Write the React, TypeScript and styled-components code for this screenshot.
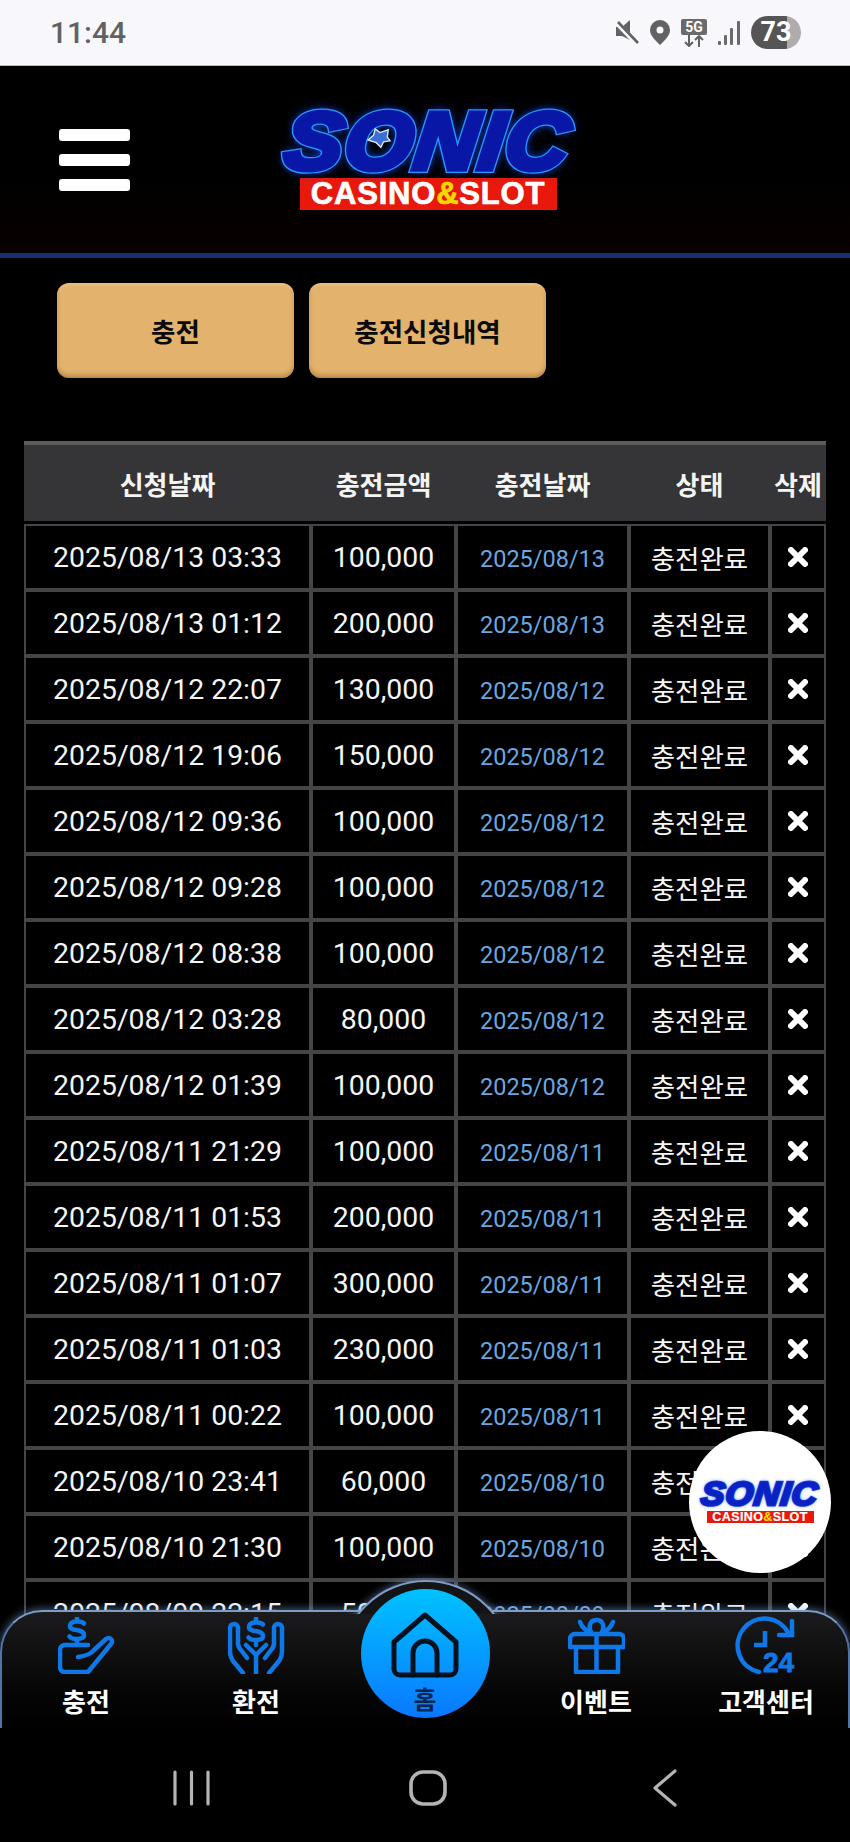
import React from 'react';
import styled, { createGlobalStyle } from 'styled-components';

const GlobalStyle = createGlobalStyle`
  html, body {
    margin: 0;
    padding: 0;
    background: #000;
  }
  * {
    box-sizing: border-box;
  }
`;

const fontStack = `Roboto, "Noto Sans CJK KR", sans-serif`;
const krStack = `"Noto Sans CJK KR", Roboto, sans-serif`;
const navBlue = '#0f78e8';

const Page = styled.div`
  position: relative;
  width: 850px;
  height: 1842px;
  overflow: hidden;
  background: #000;
  font-family: ${fontStack};
  color: #fff;
`;

const StatusBar = styled.div`
  display: flex;
  align-items: center;
  justify-content: space-between;
  height: 66px;
  padding: 0 49px 0 50px;
  background: #f8f7fb;
  border-bottom: 1px solid #bbb;
`;
const Clock = styled.span`
  font-size: 30px;
  font-weight: 500;
  color: #626262;
`;
const StatusIcons = styled.div`
  display: flex;
  align-items: center;
  gap: 11px;
`;
const FiveG = styled.div`
  display: flex;
  flex-direction: column;
  align-items: center;
  width: 26px;
`;
const FiveGTag = styled.span`
  width: 26px;
  height: 16px;
  border-radius: 2px;
  background: #6a6a6a;
  color: #fff;
  font-size: 14px;
  font-weight: 700;
  line-height: 16px;
  text-align: center;
`;
const Battery = styled.div`
  width: 50px;
  height: 33px;
  border-radius: 17px;
  background: linear-gradient(90deg, #555 0 72%, #adadad 72% 100%);
  color: #fff;
  font-size: 27px;
  font-weight: 700;
  line-height: 33px;
  text-align: center;
`;

const Header = styled.header`
  display: flex;
  align-items: center;
  height: 192px;
  padding: 0 0 0 59px;
  background: linear-gradient(#000 55%, #090000);
  border-bottom: 5px solid #14306e;
`;
const Burger = styled.div`
  display: flex;
  flex-direction: column;
  gap: 13px;
  width: 71px;
  margin-right: 149px;
`;
const BurgerBar = styled.span`
  display: block;
  height: 12px;
  border-radius: 3px;
  background: #fff;
`;

const LogoBox = styled.div<{ $small?: boolean }>`
  position: relative;
  display: flex;
  flex-direction: column;
  align-items: center;
  width: ${({ $small }) => ($small ? '120px' : '298px')};
  gap: ${({ $small }) => ($small ? '4px' : '5px')};
`;
/* word is painted twice: wide bright stroke below, narrower dark stroke on top, so the letters get fat with a neon rim */
const LogoWord = styled.span<{ $small?: boolean }>`
  position: relative;
  display: block;
  height: ${({ $small }) => ($small ? '26px' : '64px')};
  font-family: "Liberation Sans", sans-serif;
  font-size: ${({ $small }) => ($small ? '33px' : '81px')};
  font-weight: 700;
  font-style: italic;
  letter-spacing: ${({ $small }) => ($small ? '1px' : '2px')};
  line-height: ${({ $small }) => ($small ? '26px' : '64px')};
  white-space: nowrap;
  color: ${({ $small }) => ($small ? '#1a3fe0' : '#2a97ff')};
  -webkit-text-stroke: ${({ $small }) => ($small ? '3px #1a3fe0' : '8px #2a97ff')};
  text-shadow: ${({ $small }) => ($small ? '0 0 4px #0b4dff' : '0 0 8px #0b4dff, 0 0 12px #0b4dff')};
  transform: scaleX(1.07) skewX(-6deg);
  &::after {
    content: attr(data-text);
    position: absolute;
    left: 0;
    top: 0;
    color: ${({ $small }) => ($small ? '#0a22c4' : '#0917a6')};
    -webkit-text-stroke: ${({ $small }) => ($small ? '1.5px #0a22c4' : '5.500px #0917a6')};
    text-shadow: none;
  }
`;
const LogoMark = styled.svg`
  position: absolute;
  left: 87px;
  top: 18px;
`;
const LogoTag = styled.span<{ $small?: boolean }>`
  display: block;
  width: ${({ $small }) => ($small ? '107px' : '257px')};
  height: ${({ $small }) => ($small ? '12px' : '32px')};
  background: #e8190c;
  font-family: "Liberation Sans", sans-serif;
  font-size: ${({ $small }) => ($small ? '12.5px' : '31px')};
  font-weight: 700;
  letter-spacing: ${({ $small }) => ($small ? '0.4px' : '0.8px')};
  line-height: ${({ $small }) => ($small ? '12px' : '32px')};
  text-align: center;
  color: #fff;
  -webkit-text-stroke: ${({ $small }) => ($small ? '0.2px' : '0.7px')};
  white-space: nowrap;
`;
const Amp = styled.span`
  color: #f8d800;
`;

const Tabs = styled.div`
  display: flex;
  gap: 15px;
  padding: 25px 0 0 57px;
`;
const Tab = styled.div`
  display: flex;
  align-items: center;
  justify-content: center;
  width: 237px;
  height: 95px;
  border-radius: 12px;
  background: #e3b36d;
  box-shadow: inset 0 -3px 4px rgba(130, 85, 30, 0.45), inset 0 2px 3px rgba(255, 235, 190, 0.3);
  color: #0a0a0a;
  font-family: ${krStack};
  font-size: 26.500px;
  font-weight: 700;
`;

const Table = styled.table`
  width: 802px;
  margin: 63px 0 0 24px;
  border-collapse: separate;
  border-spacing: 0;
  table-layout: fixed;
`;
const HeadCell = styled.th`
  height: 83px;
  padding: 0;
  background: #353436;
  background-clip: padding-box;
  border-top: 4px solid #5c5c5c;
  border-bottom: 3px solid #000;
  color: #f4f4f4;
  font-family: ${krStack};
  font-size: 26px;
  font-weight: 700;
  text-align: center;
`;
const Cell = styled.td`
  height: 66px;
  padding: 0;
  border: 2px solid #454547;
  background: #000;
  text-align: center;
  white-space: nowrap;
  font-size: 28.400px;
  color: #f6f6f6;
`;
const AppliedDate = styled.span`
  font-size: 23.500px;
  color: #6aa7e0;
`;
const StateLabel = styled.span`
  font-family: ${krStack};
  font-size: 26.500px;
`;
const DeleteIcon = styled.svg`
  display: block;
  margin: 0 auto;
`;

const FloatingLogo = styled.div`
  position: absolute;
  top: 1431px;
  left: 689px;
  display: flex;
  align-items: center;
  justify-content: center;
  width: 142px;
  height: 142px;
  border-radius: 50%;
  background: #fff;
`;

const Dock = styled.div`
  position: absolute;
  left: 0;
  right: 0;
  bottom: 0;
`;
const BumpClip = styled.div`
  position: absolute;
  top: -42px;
  left: 316px;
  width: 215px;
  height: 44px;
  overflow: hidden;
  z-index: 2;
`;
const Bump = styled.div`
  width: 174px;
  height: 174px;
  margin: 10px auto 0;
  border: 2px solid #7f9cc6;
  border-radius: 50%;
  background: #141416;
  box-shadow: 0 0 8px rgba(125, 170, 230, 0.6);
`;
const NavBar = styled.nav`
  position: relative;
  display: grid;
  grid-template-columns: repeat(5, 170px);
  height: 118px;
  border: 2px solid #4f74a6;
  border-top-color: #7f9cc6;
  border-bottom: none;
  border-radius: 42px 42px 0 0;
  background: linear-gradient(#1b1b1d, #050505 70%, #000);
  box-shadow: 0 -1px 8px rgba(125, 170, 230, 0.55);
  clip-path: inset(-60px -12px 0 -12px);
`;
const NavItem = styled.div`
  display: flex;
  flex-direction: column;
  align-items: center;
  padding-top: 5px;
  margin-left: -2px;
`;
const NavLabel = styled.span`
  margin-top: 8px;
  font-family: ${krStack};
  font-size: 26px;
  font-weight: 700;
  line-height: 38px;
  white-space: nowrap;
  color: #fff;
`;
const HomeButton = styled.div`
  position: relative;
  z-index: 3;
  display: flex;
  flex-direction: column;
  align-items: center;
  width: 129px;
  height: 129px;
  margin: -23px auto 0;
  padding-top: 23px;
  border-radius: 50%;
  background: linear-gradient(#00c2ff, #0a78ff);
  transform: translateX(-2px);
`;
const HomeLabel = styled.span`
  margin-top: 5px;
  font-family: ${krStack};
  font-size: 25px;
  font-weight: 700;
  line-height: 30px;
  color: #06274f;
`;

const SystemNav = styled.div`
  display: grid;
  grid-template-columns: repeat(3, 237px);
  justify-content: center;
  align-items: center;
  height: 114px;
  padding: 6px 0 0 6px;
  background: #000;
`;
const SystemSlot = styled.div`
  display: flex;
  justify-content: center;
`;

type Row = { applied: string; amount: string; date: string };

const rows: Row[] = [
  { applied: '2025/08/13 03:33', amount: '100,000', date: '2025/08/13' },
  { applied: '2025/08/13 01:12', amount: '200,000', date: '2025/08/13' },
  { applied: '2025/08/12 22:07', amount: '130,000', date: '2025/08/12' },
  { applied: '2025/08/12 19:06', amount: '150,000', date: '2025/08/12' },
  { applied: '2025/08/12 09:36', amount: '100,000', date: '2025/08/12' },
  { applied: '2025/08/12 09:28', amount: '100,000', date: '2025/08/12' },
  { applied: '2025/08/12 08:38', amount: '100,000', date: '2025/08/12' },
  { applied: '2025/08/12 03:28', amount: '80,000', date: '2025/08/12' },
  { applied: '2025/08/12 01:39', amount: '100,000', date: '2025/08/12' },
  { applied: '2025/08/11 21:29', amount: '100,000', date: '2025/08/11' },
  { applied: '2025/08/11 01:53', amount: '200,000', date: '2025/08/11' },
  { applied: '2025/08/11 01:07', amount: '300,000', date: '2025/08/11' },
  { applied: '2025/08/11 01:03', amount: '230,000', date: '2025/08/11' },
  { applied: '2025/08/11 00:22', amount: '100,000', date: '2025/08/11' },
  { applied: '2025/08/10 23:41', amount: '60,000', date: '2025/08/10' },
  { applied: '2025/08/10 21:30', amount: '100,000', date: '2025/08/10' },
  { applied: '2025/08/09 22:15', amount: '50,000', date: '2025/08/09' },
];

const Logo = ({ small }: { small?: boolean }) => (
  <LogoBox $small={small}>
    <LogoWord $small={small} data-text="SONIC">SONIC</LogoWord>
    {!small && (
      <LogoMark width="26" height="24" viewBox="0 0 28 26">
        <path d="M2 14L8 9 10 2l5 4 9-3-1 8 3 4-7 1-3 6-5-5z" fill="#3a6fd8" stroke="#dbe8fa" strokeWidth="1.5" />
      </LogoMark>
    )}
    <LogoTag $small={small}>
      CASINO<Amp>&amp;</Amp>SLOT
    </LogoTag>
  </LogoBox>
);

const MuteIcon = () => (
  <svg width="24" height="25" viewBox="0 0 24 25" fill="#626262">
    <path d="M1 7h6l8-7v20L7 16H1z" />
    <path d="M2 3l20 21" stroke="#f8f7fb" strokeWidth="5" />
    <path d="M3 2l20 21" stroke="#626262" strokeWidth="2.6" />
  </svg>
);
const PinIcon = () => (
  <svg width="20" height="25" viewBox="0 0 20 25">
    <path fillRule="evenodd" fill="#626262" d="M10 0a10 10 0 0 1 10 10c0 6-6 11-10 15C6 21 0 16 0 10A10 10 0 0 1 10 0zm0 6.5a3.5 3.5 0 1 0 0 7 3.5 3.5 0 0 0 0-7z" />
  </svg>
);
const TransferArrows = () => (
  <svg width="24" height="12" viewBox="0 0 24 12" fill="none" stroke="#626262" strokeWidth="2">
    <path d="M7 0v11M3 7l4 4 4-4M17 12V1M13 5l4-4 4 4" />
  </svg>
);
const SignalIcon = () => (
  <svg width="22" height="24" viewBox="0 0 22 24" fill="#6a6a6a">
    <rect x="0" y="20" width="3" height="4" rx="1" />
    <rect x="6" y="14" width="3" height="10" rx="1" />
    <rect x="12" y="7" width="3" height="17" rx="1" />
    <rect x="19" y="0" width="3" height="24" rx="1" />
  </svg>
);

const CrossIcon = () => (
  <DeleteIcon width="20" height="20" viewBox="0 0 20 20">
    <path d="M3 3l14 14M17 3L3 17" stroke="#fff" strokeWidth="6" strokeLinecap="round" />
  </DeleteIcon>
);

const DollarMark = ({ x, y }: { x: number; y: number }) => (
  <g transform={`translate(${x} ${y})`}>
    <path d="M7 -6.5C5 -9 -7 -10 -7 -4C-7 2 7 -2 7 5C7 10 -5 10 -7.5 6.5M0 -13v4M0 10v4" />
  </g>
);

const ChargeIcon = () => (
  <svg width="57" height="57" viewBox="0 0 57 57" fill="none" stroke={navBlue} strokeWidth="4.5" strokeLinecap="round" strokeLinejoin="round">
    <DollarMark x={19} y={13} />
    <path d="M30 28H7a5 5 0 0 0-5 5v17a5 5 0 0 0 5 5h23L53 27a3.5 3.5 0 0 0-5-5L36 33c-3 4-7 6-16 7" />
  </svg>
);
const ExchangeIcon = () => (
  <svg width="57" height="57" viewBox="0 0 57 57" fill="none" stroke={navBlue} strokeWidth="4.5" strokeLinecap="round" strokeLinejoin="round">
    <DollarMark x={28} y={14} />
    <path d="M28 56V38L18 28M28 38l10-10" />
    <path d="M15 56L5 44c-2-3-3-5-3-9V11a4 4 0 0 1 8 0v15c0 3 1 5 3 7l6 8" />
    <path d="M41 56l10-12c2-3 3-5 3-9V11a4 4 0 0 0-8 0v15c0 3-1 5-3 7l-6 8" />
  </svg>
);
const HouseIcon = () => (
  <svg width="68" height="66" viewBox="0 0 68 66" fill="none" stroke="#04111f" strokeWidth="5" strokeLinecap="round" strokeLinejoin="round">
    <path d="M34 3L65 30V57a6 6 0 0 1-6 6H9a6 6 0 0 1-6-6V30z" />
    <path d="M22 63V41a12 12 0 0 1 24 0V63" />
  </svg>
);
const GiftIcon = () => (
  <svg width="57" height="57" viewBox="0 0 57 57" fill="none" stroke={navBlue} strokeWidth="4.5" strokeLinejoin="round">
    <path d="M2 30v-8a5 5 0 0 1 5-5h44a5 5 0 0 1 5 5v8z" />
    <path d="M8 30v25h42V30M28.500 17v38" />
    <path d="M12 5c2 6 6 9 12 12c-4-6-3-14 4.500-14S37 11 33 17c6-3 10-6 12-12" strokeLinecap="round" />
  </svg>
);
const SupportIcon = () => (
  <svg width="58" height="57" viewBox="0 0 58 57" overflow="visible" fill="none" stroke={navBlue} strokeWidth="4.5" strokeLinecap="round">
    <path d="M52 17A27 27 0 1 0 22 55" />
    <path d="M55 4V18H42" />
    <path d="M28 14V28H17" strokeLinecap="butt" />
    <text x="26" y="55" fill={navBlue} stroke={navBlue} strokeWidth="0.8" fontFamily="'Liberation Sans', sans-serif" fontSize="28" fontWeight="700">24</text>
  </svg>
);

const tabs = ['충전', '충전신청내역'];
const columns = [
  { label: '신청날짜', width: 287 },
  { label: '충전금액', width: 145 },
  { label: '충전날짜', width: 173 },
  { label: '상태', width: 141 },
  { label: '삭제', width: 56 },
];

export default function App() {
  return (
    <Page>
      <GlobalStyle />
      <StatusBar>
        <Clock>11:44</Clock>
        <StatusIcons>
          <MuteIcon />
          <PinIcon />
          <FiveG>
            <FiveGTag>5G</FiveGTag>
            <TransferArrows />
          </FiveG>
          <SignalIcon />
          <Battery>73</Battery>
        </StatusIcons>
      </StatusBar>

      <Header>
        <Burger>
          <BurgerBar />
          <BurgerBar />
          <BurgerBar />
        </Burger>
        <Logo />
      </Header>

      <Tabs>
        {tabs.map((t) => (
          <Tab key={t}>{t}</Tab>
        ))}
      </Tabs>

      <Table>
        <colgroup>
          {columns.map((c) => (
            <col key={c.label} width={c.width} />
          ))}
        </colgroup>
        <thead>
          <tr>
            {columns.map((c) => (
              <HeadCell key={c.label}>{c.label}</HeadCell>
            ))}
          </tr>
        </thead>
        <tbody>
          {rows.map((r) => (
            <tr key={r.applied}>
              <Cell>{r.applied}</Cell>
              <Cell>{r.amount}</Cell>
              <Cell>
                <AppliedDate>{r.date}</AppliedDate>
              </Cell>
              <Cell>
                <StateLabel>충전완료</StateLabel>
              </Cell>
              <Cell>
                <CrossIcon />
              </Cell>
            </tr>
          ))}
        </tbody>
      </Table>

      <FloatingLogo>
        <Logo small />
      </FloatingLogo>

      <Dock>
        <NavBar>
          <BumpClip>
            <Bump />
          </BumpClip>
          <NavItem>
            <ChargeIcon />
            <NavLabel>충전</NavLabel>
          </NavItem>
          <NavItem>
            <ExchangeIcon />
            <NavLabel>환전</NavLabel>
          </NavItem>
          <HomeButton>
            <HouseIcon />
            <HomeLabel>홈</HomeLabel>
          </HomeButton>
          <NavItem>
            <GiftIcon />
            <NavLabel>이벤트</NavLabel>
          </NavItem>
          <NavItem>
            <SupportIcon />
            <NavLabel>고객센터</NavLabel>
          </NavItem>
        </NavBar>
        <SystemNav>
          <SystemSlot>
            <svg width="37" height="36" viewBox="0 0 37 36" fill="none" stroke="#b4b4b4" strokeWidth="3.2" strokeLinecap="round">
              <path d="M2 2v32M18.500 2v32M35 2v32" />
            </svg>
          </SystemSlot>
          <SystemSlot>
            <svg width="38" height="36" viewBox="0 0 38 36" fill="none" stroke="#b4b4b4" strokeWidth="3.6">
              <rect x="2" y="2" width="34" height="32" rx="12" />
            </svg>
          </SystemSlot>
          <SystemSlot>
            <svg width="24" height="38" viewBox="0 0 24 38" fill="none" stroke="#b4b4b4" strokeWidth="3.2" strokeLinecap="round" strokeLinejoin="round">
              <path d="M22 2L2 19l20 17" />
            </svg>
          </SystemSlot>
        </SystemNav>
      </Dock>
    </Page>
  );
}
